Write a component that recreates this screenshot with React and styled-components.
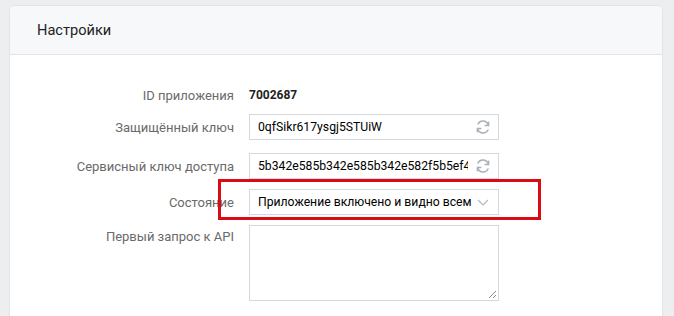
import React from "react";
import styled, { createGlobalStyle } from "styled-components";

const Global = createGlobalStyle`
  html, body { margin: 0; padding: 0; background: #edeef0; }
  body { font-family: Roboto, "Open Sans", Arial, sans-serif; -webkit-font-smoothing: antialiased; }
`;

const Page = styled.div`
  width: 674px;
  height: 316px;
  overflow: hidden;
  padding: 6px 12px 0 10px;
  box-sizing: border-box;
`;

const Card = styled.section`
  background: #fff;
  border-radius: 4px;
  box-shadow: 0 0 0 1px #e3e4e8;
  height: 340px;
`;

const Header = styled.header`
  height: 48px;
  background: #f7f8fa;
  border-bottom: 1px solid #e3e4e8;
  border-radius: 4px 4px 0 0;
  display: flex;
  align-items: center;
  padding-left: 27px;
  font-size: 14.6px;
  color: #222;
`;

const Body = styled.div`
  padding-top: 30px;
  display: flex;
  flex-direction: column;
`;

const Row = styled.div`
  display: grid;
  grid-template-columns: 224px 250px;
  column-gap: 15px;
  align-items: ${(p) => (p.$top ? "start" : "center")};
  margin-top: ${(p) => p.$mt || 0}px;
  min-height: 20px;
`;

const Label = styled.div`
  text-align: right;
  font-size: 13px;
  color: #6a6a6a;
  padding-top: ${(p) => (p.$top ? 4 : 0)}px;
`;

const Value = styled.div`
  font-size: 12px;
  font-weight: 700;
  color: #222;
`;

const Field = styled.div`
  position: relative;
  height: 26px;
  border: 1px solid #d3d9de;
  box-sizing: border-box;
  display: flex;
  align-items: center;
  padding: 0 ${(p) => (p.$select ? 20 : 30)}px 0 8px;
  font-size: 12.2px;
  color: #000;
  background: #fff;
  white-space: nowrap;
  overflow: hidden;
`;

const FieldText = styled.span`
  overflow: hidden;
  white-space: nowrap;
`;

const IconSlot = styled.span`
  position: absolute;
  right: 5px;
  top: 0;
  bottom: 0;
  width: 20px;
  display: flex;
  align-items: center;
  justify-content: center;
  background: ${(p) => (p.$clear ? "transparent" : "#fff")};
`;

const TextArea = styled.div`
  position: relative;
  height: 76px;
  border: 1px solid #d3d9de;
  box-sizing: border-box;
  background: #fff;
`;

const Grip = styled.svg`
  position: absolute;
  right: 1px;
  bottom: 1px;
`;

const Highlight = styled.div`
  position: absolute;
  left: -31px;
  right: -42px;
  top: -10px;
  bottom: -5px;
  border: 3px solid #dc0a14;
  pointer-events: none;
`;

const SelectWrap = styled.div`
  position: relative;
`;

const Refresh = () => (
  <svg width="16" height="16" viewBox="0 0 16 16" fill="none" stroke="#a9b1b9" strokeWidth="1.5" strokeLinecap="round" strokeLinejoin="round">
    <path d="M13.3 6.4A5.5 5.5 0 0 0 3 5" />
    <path d="M2.7 9.6A5.5 5.5 0 0 0 13 11" />
    <path d="M13.6 3.2v3.4h-3.4" />
    <path d="M2.4 12.8V9.4h3.4" />
  </svg>
);

const Chevron = () => (
  <svg width="12" height="7" viewBox="0 0 12 7" fill="none" stroke="#b4b9bf" strokeWidth="1.2">
    <path d="M1 1l5 5 5-5" />
  </svg>
);

export default function App() {
  return (
    <>
      <Global />
      <Page>
        <Card>
          <Header>Настройки</Header>
          <Body>
            <Row>
              <Label>ID приложения</Label>
              <Value>7002687</Value>
            </Row>
            <Row $mt={9}>
              <Label>Защищённый ключ</Label>
              <Field>
                <FieldText>0qfSikr617ysgj5STUiW</FieldText>
                <IconSlot><Refresh /></IconSlot>
              </Field>
            </Row>
            <Row $mt={13}>
              <Label>Сервисный ключ доступа</Label>
              <Field>
                <FieldText>5b342e585b342e585b342e582f5b5ef46f5b342e58</FieldText>
                <IconSlot><Refresh /></IconSlot>
              </Field>
            </Row>
            <Row $mt={10}>
              <Label>Состояние</Label>
              <SelectWrap>
                <Field $select>
                  <FieldText>Приложение включено и видно всем</FieldText>
                  <IconSlot $clear><Chevron /></IconSlot>
                </Field>
                <Highlight />
              </SelectWrap>
            </Row>
            <Row $mt={10} $top>
              <Label $top>Первый запрос к API</Label>
              <TextArea>
                <Grip width="10" height="10" viewBox="0 0 10 10" stroke="#888" strokeWidth="1">
                  <path d="M9 2L2 9M9 6L6 9" />
                </Grip>
              </TextArea>
            </Row>
          </Body>
        </Card>
      </Page>
    </>
  );
}
